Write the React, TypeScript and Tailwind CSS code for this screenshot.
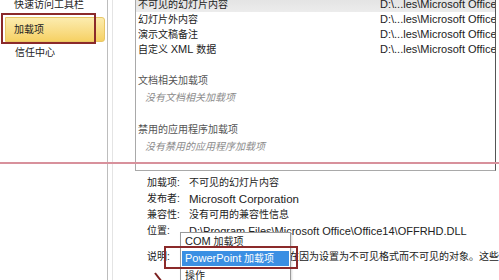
const L = ({ children }: { children: React.ReactNode }) => (
  <span className="text-[11px]">{children}</span>
);

const rows = ['不可见的幻灯片内容', '幻灯片外内容', '演示文稿备注'];

const App = () => {
  return (
    <div className="relative flex w-[499px] h-[280px] overflow-hidden bg-white font-['Liberation_Sans','Noto_Sans_CJK_SC',sans-serif] text-[10px] text-[#222]">
      {/* left nav */}
      <div className="w-[108px] shrink-0 h-full border-r border-[#bdbdbd]">
        <div className="mt-[-3px] h-[16px] leading-[16px] pl-[14px]">快速访问工具栏</div>
        <div className="relative mt-[4px] ml-[5px] w-[100px] h-[25px] rounded-r-[3px] border border-[#e9c766] bg-gradient-to-b from-[#fcecae] to-[#f6d163] leading-[23px] pl-[8px]">
          加载项
          <div className="absolute left-[-5px] top-[-5px] w-[95px] h-[31px] border-2 border-[#8b2a2a]" />
        </div>
        <div className="mt-[3px] h-[16px] leading-[16px] pl-[15px]">信任中心</div>
      </div>

      {/* right panel */}
      <div className="flex-1 min-w-0 pl-[4px]">
        <div className="h-full border-l border-[#e4e4e4] pl-[22px]">
          <div className="w-[361px] h-[171px] overflow-hidden border-l border-b border-r border-l-[#a9a9a9] border-b-[#a9a9a9] border-r-[#555]">
            <div className="mt-[-3px]">
              {rows.map((r, i) => (
                <div
                  key={r}
                  className={`flex h-[15px] leading-[15px] pl-[2px] whitespace-nowrap ${i === 0 ? 'bg-gradient-to-b from-[#e2e2e2] to-[#ececec]' : ''}`}
                >
                  <div className="w-[242px] shrink-0">{r}</div>
                  <div className="shrink-0"><L>D:\...les\Microsoft Office\Office14</L></div>
                </div>
              ))}
              <div className="flex h-[15px] leading-[15px] pl-[2px] whitespace-nowrap">
                <div className="w-[242px] shrink-0">
                  自定义 <L>XML</L> 数据
                </div>
                <div className="shrink-0"><L>D:\...les\Microsoft Office\Office14</L></div>
              </div>
            </div>

            <div className="mt-[15px] h-[17px] leading-[17px] pl-[2px] text-[#555]">文档相关加载项</div>
            <div className="h-[17px] leading-[17px] pl-[9px] italic text-[#8a8a8a]">没有文档相关加载项</div>
            <div className="mt-[15px] h-[17px] leading-[17px] pl-[2px] text-[#555]">禁用的应用程序加载项</div>
            <div className="h-[17px] leading-[17px] pl-[9px] italic text-[#8a8a8a]">没有禁用的应用程序加载项</div>
          </div>

          <div className="ml-[12px] mt-[4px] whitespace-nowrap">
            <div className="flex h-[16px] leading-[16px]">
              <div className="w-[42px] shrink-0">加载项:</div>
              <div>不可见的幻灯片内容</div>
            </div>
            <div className="flex h-[16px] leading-[16px]">
              <div className="w-[42px] shrink-0">发布者:</div>
              <div className="text-[11.5px]">Microsoft Corporation</div>
            </div>
            <div className="flex h-[16px] leading-[16px]">
              <div className="w-[42px] shrink-0">兼容性:</div>
              <div>没有可用的兼容性信息</div>
            </div>
            <div className="flex h-[16px] leading-[16px]">
              <div className="w-[42px] shrink-0">位置:</div>
              <div><L>D:\Program Files\Microsoft Office\Office14\OFFRHD.DLL</L></div>
            </div>
            <div className="flex mt-[10px] h-[16px] leading-[16px]">
              <div className="w-[42px] shrink-0">说明:</div>
              <div>检查演示文稿中是否存在因为设置为不可见格式而不可见的对象。这些对象</div>
            </div>
          </div>
        </div>
      </div>

      {/* red annotation line */}
      <div className="absolute left-0 top-[162px] w-full h-[2px] bg-[#d8919c]" />

      {/* dropdown */}
      <div className="absolute left-[180px] top-[232px] w-[111px] h-[60px] bg-white border border-[#9a9a9a] shadow-[1px_1px_2px_rgba(0,0,0,0.15)] whitespace-nowrap">
        <div className="h-[17px] leading-[17px] pl-[4px]">
          <L>COM</L> 加载项
        </div>
        <div className="h-[17px] py-[1px] px-[1px]">
          <div className="h-[15px] leading-[15px] pl-[3px] bg-[#3b8fe3] text-white">
            <L>PowerPoint</L> 加载项
          </div>
        </div>
        <div className="h-[17px] leading-[17px] pl-[4px]">操作</div>
      </div>
      <div className="absolute left-[164px] top-[246px] w-[134px] h-[23px] border-2 border-[#8b2a2a]" />

      <svg className="absolute left-[152px] top-[270px]" width="12" height="12" viewBox="0 0 12 12">
        <path d="M3 3 L10 12" stroke="#7a1f1f" strokeWidth="2" />
      </svg>
    </div>
  );
};

export default App;
